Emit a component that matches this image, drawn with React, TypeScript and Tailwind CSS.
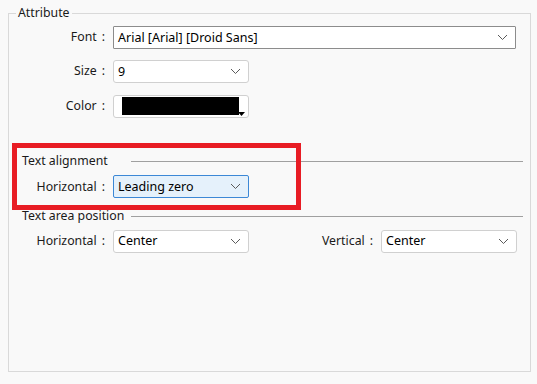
import React from "react";

const Chevron = () => (
  <svg width="11" height="7" viewBox="0 0 11 7" className="shrink-0">
    <path d="M1 1 L5.5 5.5 L10 1" fill="none" stroke="#5a5a5a" strokeWidth="1" />
  </svg>
);

function Select({
  value,
  width,
  variant = "normal",
}: {
  value: string;
  width: string;
  variant?: "normal" | "focused" | "editable";
}) {
  const cls =
    variant === "focused"
      ? "border-[#3c88d6] bg-[#e5f1fb] rounded-[2px]"
      : variant === "editable"
      ? "border-[#8c8c8c] bg-white rounded-[1px]"
      : "border-[#d0d0d0] bg-white rounded-[3px]";
  return (
    <div
      className={`${width} h-[23px] border ${cls} flex items-center justify-between pl-[4px] pr-[7px] text-[12.5px] text-black`}
    >
      <span className="leading-none pt-[1px]">{value}</span>
      <Chevron />
    </div>
  );
}

function Row({ label, children, labelW = "w-[96px]" }: { label: string; children: React.ReactNode; labelW?: string }) {
  return (
    <div className="flex items-center">
      <div className={`${labelW} flex justify-end text-[12.3px] text-[#1a1a1a]`}>
        <span>{label}</span>
        <span className="ml-[5px]">:</span>
      </div>
      <div className="ml-[8px]">{children}</div>
    </div>
  );
}

function SectionHeader({ title }: { title: string }) {
  return (
    <div className="flex items-center">
      <span className="text-[12.3px] text-[#1a1a1a] ml-[13px] w-[109px] leading-none">{title}</span>
      <div className="flex-1 h-px bg-[#a0a0a0] mr-[7px]" />
    </div>
  );
}

export default function App() {
  return (
    <div
      className="w-[537px] h-[384px] bg-[#f9f9f9] relative pt-[5px]"
      style={{ fontFamily: '"Segoe UI", "Noto Sans", "Open Sans", sans-serif' }}
    >
      <fieldset className="ml-[8px] w-[523px] h-[367px] border border-[#d9d9d9] px-0 pb-0 pt-[5px] m-0">
        <legend className="ml-[7px] px-[2px] text-[12.3px] text-[#1a1a1a] leading-[16px]">Attribute</legend>
        <div className="flex flex-col">
          <Row label="Font">
            <Select value="Arial [Arial] [Droid Sans]" width="w-[403px]" variant="editable" />
          </Row>
          <div className="mt-[11px]">
            <Row label="Size">
              <Select value="9" width="w-[136px]" />
            </Row>
          </div>
          <div className="mt-[12px]">
            <Row label="Color">
              <div className="w-[136px] h-[23px] border border-[#d0d0d0] bg-white rounded-[3px] relative">
                <div className="absolute left-[8px] top-[1px] w-[117px] h-[18px] bg-black" />
                <svg width="7" height="4" viewBox="0 0 7 4" className="absolute left-[124px] top-[16px]">
                  <path d="M0 0 H7 L3.5 4 Z" fill="#000" />
                </svg>
              </div>
            </Row>
          </div>
          <div className="mt-[37px]">
            <SectionHeader title="Text alignment" />
          </div>
          <div className="mt-[8px]">
            <Row label="Horizontal">
              <Select value="Leading zero" width="w-[136px]" variant="focused" />
            </Row>
          </div>
          <div className="mt-[12px]">
            <SectionHeader title="Text area position" />
          </div>
          <div className="mt-[7px] flex items-center">
            <Row label="Horizontal">
              <Select value="Center" width="w-[136px]" />
            </Row>
            <Row label="Vertical" labelW="w-[124px]">
              <Select value="Center" width="w-[136px]" />
            </Row>
          </div>
        </div>
      </fieldset>
      <div className="absolute left-[12px] top-[143px] w-[289px] h-[67px] border-[5px] border-[#e81c24] pointer-events-none" />
    </div>
  );
}
